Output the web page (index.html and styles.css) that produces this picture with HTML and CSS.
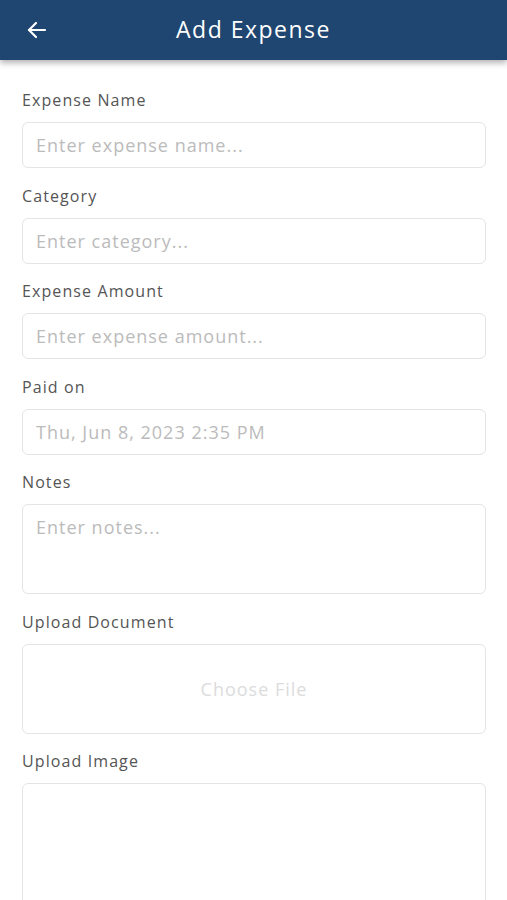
FILE: index.html
```html
<!DOCTYPE html>
<html lang="en">
<head>
    <meta charset="UTF-8">
    <meta name="viewport" content="width=device-width, initial-scale=1.0">
    <title>Add Expense</title>
    <link rel="stylesheet" href="styles.css">
</head>
<body>
    <header class="topbar">
        <button class="back-btn" aria-label="Back">
            <svg width="24" height="24" viewBox="0 0 24 24" fill="none" stroke="#fff" stroke-width="2.2" stroke-linecap="round" stroke-linejoin="round">
                <path d="M20 12H4"/>
                <path d="M11 5l-7 7 7 7"/>
            </svg>
        </button>
        <h1>Add Expense</h1>
    </header>

    <form class="expense-form" id="add-expense-form">
        <label for="expense-name">Expense Name</label>
        <input type="text" id="expense-name" placeholder="Enter expense name...">

        <label for="expense-category">Category</label>
        <input type="text" id="expense-category" placeholder="Enter category...">

        <label for="expense-amount">Expense Amount</label>
        <input type="text" id="expense-amount" placeholder="Enter expense amount...">

        <label for="paid-on">Paid on</label>
        <input type="text" id="paid-on" placeholder="Thu, Jun 8, 2023 2:35 PM">

        <label for="expense-notes">Notes</label>
        <textarea id="expense-notes" placeholder="Enter notes..."></textarea>

        <label>Upload Document</label>
        <div class="upload-box">Choose File</div>

        <label>Upload Image</label>
        <div class="upload-box image-box"></div>
    </form>
</body>
</html>
```

FILE: styles.css
```css
body {
    font-family: "Open Sans", Lato, sans-serif;
    margin: 0;
    padding: 0;
    background: #fff;
    overflow: hidden;
}

.topbar {
    height: 60px;
    background: #1f4670;
    display: flex;
    align-items: center;
    position: relative;
    box-shadow: 0 3px 6px rgba(0, 0, 0, 0.3);
}

.back-btn {
    background: none;
    border: none;
    padding: 0;
    margin-left: 25px;
    display: flex;
    cursor: pointer;
}

.topbar h1 {
    flex: 1;
    margin: 0 0 2px 0;
    padding-right: 49px;
    text-align: center;
    color: #fff;
    font-size: 23px;
    font-weight: 400;
    letter-spacing: 1.5px;
}

.expense-form {
    display: flex;
    flex-direction: column;
    padding: 30px 21px 0 22px;
}

label {
    height: 20px;
    line-height: 20px;
    font-size: 16px;
    color: #555;
    letter-spacing: 1.1px;
    margin-bottom: 12px;
}

input,
textarea,
.upload-box {
    box-sizing: border-box;
    width: 100%;
    height: 46px;
    margin: 0 0 17.5px 0;
    padding: 0 13px;
    border: 1.5px solid #e4e4e4;
    border-radius: 6px;
    font-family: inherit;
    font-size: 18px;
    letter-spacing: 1px;
    color: #333;
    outline: none;
}

input::placeholder,
textarea::placeholder {
    color: #bbb;
}

textarea {
    height: 90px;
    padding-top: 10px;
    resize: none;
}

.upload-box {
    height: 90px;
    display: flex;
    align-items: center;
    justify-content: center;
    color: #dcdcdc;
}

.image-box {
    height: 200px;
}
```
